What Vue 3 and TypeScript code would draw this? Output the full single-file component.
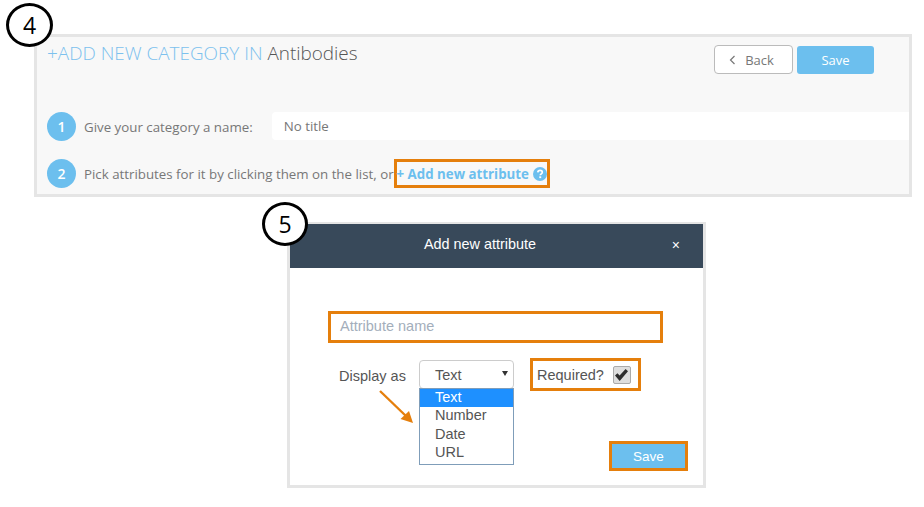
<template>
  <div class="page">
    <section class="panel">
      <span class="step step--four">4</span>
      <header class="panel__head">
        <h1 class="panel__title"><span>+ADD NEW CATEGORY IN</span> Antibodies</h1>
        <div class="panel__actions">
          <button class="btn-back" type="button">
            <svg width="7" height="10" viewBox="0 0 7 10"><path d="M5.5 1 1.5 5l4 4" fill="none" stroke="#777" stroke-width="1.2" /></svg>
            Back
          </button>
          <button class="btn-save" type="button">Save</button>
        </div>
      </header>
      <div class="row row--name">
        <span class="num">1</span>
        <span class="row__label">Give your category a name:</span>
        <div class="name-field">No title</div>
      </div>
      <div class="row row--pick">
        <span class="num">2</span>
        <span class="row__label">Pick attributes for it by clicking them on the list, or</span>
        <a class="add-link">
          + Add new attribute
          <svg class="add-link__help" width="14" height="14" viewBox="0 0 14 14">
            <circle cx="7" cy="7" r="7" fill="#6cbfee" />
            <path d="M4.8 5.4C4.9 4.1 5.9 3.3 7.1 3.3c1.3 0 2.2.8 2.2 1.9 0 1.6-2 1.6-2 3.1" fill="none" stroke="#fff" stroke-width="1.7" />
            <rect x="6.3" y="9.3" width="1.9" height="1.8" fill="#fff" />
          </svg>
        </a>
      </div>
    </section>

    <section class="modal">
      <span class="step step--five">5</span>
      <header class="modal__head">
        <span class="modal__title">Add new attribute</span>
        <span class="modal__close">×</span>
      </header>
      <div class="modal__body">
        <div class="attr-name">Attribute name</div>
        <div class="options">
          <span class="options__label">Display as</span>
          <div class="select">
            <div class="select__box">
              <span>Text</span>
              <i class="select__caret"></i>
            </div>
            <ul class="select__menu">
              <li v-for="(opt, i) in options" :key="opt" :class="{ active: i === 0 }">{{ opt }}</li>
            </ul>
          </div>
          <div class="required">
            <span>Required?</span>
            <span class="check">
              <svg width="15" height="14" viewBox="0 0 15 14"><path d="M1 7.5 3.4 5.2 5.6 7.6 11.6 1 14 3.2 5.7 13Z" fill="#2e2e2e" /></svg>
            </span>
          </div>
        </div>
        <div class="modal__foot">
          <button class="modal__save" type="button">Save</button>
        </div>
        <svg class="arrow" width="40" height="38" viewBox="0 0 40 38">
          <path d="M3 3 30 29" stroke="#e57f0c" stroke-width="2.4" fill="none" />
          <path d="M36 35 23.5 31 32 23Z" fill="#e57f0c" />
        </svg>
      </div>
    </section>
  </div>
</template>

<script setup lang="ts">
const options: string[] = ['Text', 'Number', 'Date', 'URL']
</script>

<style>
html,
body {
  margin: 0;
  background: #fff;
}
</style>

<style scoped>
.page {
  width: 924px;
  height: 507px;
  overflow: hidden;
  padding-top: 34px;
  box-sizing: border-box;
  background: #fff;
}

.panel {
  position: relative;
  box-sizing: border-box;
  width: 878px;
  height: 163px;
  margin-left: 34px;
  border: 3px solid #e5e5e5;
  background: #f8f8f8;
  font-family: 'Open Sans', sans-serif;
  color: #777;
}

.step {
  position: absolute;
  z-index: 1;
  box-sizing: border-box;
  display: flex;
  align-items: center;
  justify-content: center;
  border: 3px solid #000;
  border-radius: 50%;
  background: #fff;
  color: #000;
  font-family: 'Open Sans', sans-serif;
  font-size: 23px;
}

.step--four {
  left: -31px;
  top: -34px;
  width: 47px;
  height: 44px;
}

.step--five {
  left: -28px;
  top: -22px;
  width: 46px;
  height: 44px;
}

.panel__head {
  display: flex;
  justify-content: space-between;
  height: 75px;
  padding: 4px 35px 0 10px;
  box-sizing: border-box;
}

.panel__title {
  margin: 0;
  font-size: 18.9px;
  font-weight: 300;
  line-height: 25px;
  color: #555;
}

.panel__title span {
  color: #7cc1ee;
}

.panel__actions {
  display: flex;
  gap: 4px;
  align-items: flex-start;
  padding-top: 4px;
}

.btn-back,
.btn-save {
  box-sizing: border-box;
  font-family: inherit;
  font-size: 13px;
  padding: 0;
}

.btn-back {
  display: flex;
  align-items: center;
  justify-content: center;
  gap: 9px;
  width: 79px;
  height: 29px;
  padding-right: 4px;
  border: 1px solid #bbb;
  border-radius: 4px;
  background: #fff;
  color: #777;
}

.btn-save {
  width: 77px;
  height: 28px;
  margin-top: 1px;
  border: 0;
  border-radius: 3px;
  background: #6cbfee;
  color: #fff;
}

.row {
  display: flex;
  align-items: center;
  padding-left: 10px;
  font-size: 13.3px;
}

.row--name {
  height: 29px;
}

.row--pick {
  height: 29px;
  margin-top: 18px;
}

.num {
  flex: none;
  width: 29px;
  height: 29px;
  margin-right: 8px;
  border-radius: 50%;
  background: #6cbfee;
  color: #fff;
  font-weight: 600;
  font-size: 14px;
  line-height: 29px;
  text-align: center;
}

.name-field {
  box-sizing: border-box;
  flex: none;
  width: 637px;
  height: 28px;
  margin-left: 19px;
  margin-top: -2px;
  padding-left: 12px;
  border-radius: 4px 0 0 4px;
  background: #fff;
  line-height: 28px;
}

.add-link {
  box-sizing: border-box;
  display: flex;
  align-items: center;
  gap: 4px;
  flex: none;
  width: 156px;
  height: 29px;
  border: 3px solid #e57f0c;
  color: #6cbfee;
  font-weight: 700;
  white-space: nowrap;
}

.add-link__help {
  flex: none;
}

.modal {
  position: relative;
  box-sizing: border-box;
  width: 419px;
  height: 266px;
  margin: 25px 0 0 287px;
  border: 3px solid #e5e5e5;
  border-top-width: 2px;
  background: #fff;
  font-family: 'Liberation Sans', Arial, sans-serif;
  color: #555;
}

.modal__head {
  position: relative;
  display: flex;
  align-items: center;
  justify-content: center;
  height: 44px;
  padding: 0 33px 4px 0;
  box-sizing: border-box;
  background: #38495a;
  color: #fff;
  font-size: 14.4px;
}

.modal__close {
  position: absolute;
  right: 23px;
  top: 13px;
  font-size: 14px;
}

.modal__body {
  position: relative;
  padding: 43px 40px 0 38px;
}

.attr-name {
  box-sizing: border-box;
  width: 335px;
  height: 32px;
  padding-left: 9px;
  border: 3px solid #e57f0c;
  color: #a3aebb;
  font-size: 14.5px;
  line-height: 25px;
}

.options {
  display: flex;
  align-items: flex-start;
  margin-top: 15px;
  font-size: 14.5px;
}

.options__label {
  width: 91px;
  padding-left: 11px;
  box-sizing: border-box;
  margin-top: 10px;
}

.select {
  position: relative;
  width: 95px;
  margin-top: 2px;
}

.select__box {
  box-sizing: border-box;
  display: flex;
  align-items: center;
  justify-content: space-between;
  height: 29px;
  padding: 1px 5px 0 15px;
  border: 1px solid #ccc;
  border-radius: 4px;
  background: #fff;
}

.select__caret {
  width: 0;
  height: 0;
  margin-bottom: 4px;
  border-left: 3px solid transparent;
  border-right: 3px solid transparent;
  border-top: 5px solid #333;
}

.select__menu {
  position: absolute;
  left: 0;
  top: 28px;
  box-sizing: border-box;
  width: 95px;
  height: 77px;
  margin: 0;
  padding: 0;
  list-style: none;
  border: 1px solid #7f9db9;
  background: #fff;
  line-height: 17.3px;
}

.select__menu li {
  padding: 0 0 1px 15px;
}

.select__menu li.active {
  background: #1e90ff;
  color: #fff;
}

.required {
  box-sizing: border-box;
  display: flex;
  align-items: center;
  gap: 9px;
  width: 111px;
  height: 33px;
  margin-left: 16px;
  padding-left: 4px;
  border: 3px solid #e57f0c;
}

.check {
  display: flex;
  align-items: center;
  justify-content: center;
  box-sizing: border-box;
  width: 18px;
  height: 18px;
  border: 1px solid #aaa;
  border-radius: 2px;
  background: #dedede;
}

.modal__foot {
  display: flex;
  justify-content: flex-end;
  margin-top: 50px;
  margin-right: -25px;
}

.modal__save {
  box-sizing: border-box;
  width: 79px;
  height: 30px;
  border: 3px solid #e57f0c;
  background: #6cbfee;
  color: #fff;
  font-family: inherit;
  font-size: 13.5px;
  padding: 0;
}

.arrow {
  position: absolute;
  left: 87px;
  top: 120px;
}
</style>
